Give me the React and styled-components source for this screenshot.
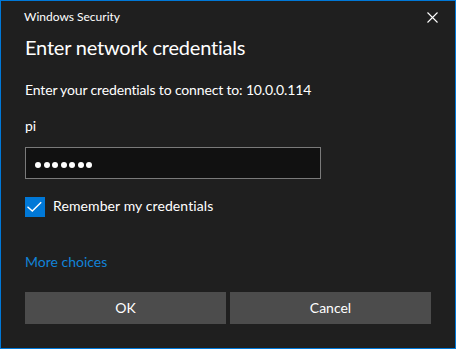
import React from "react";
import styled, { createGlobalStyle } from "styled-components";

const Global = createGlobalStyle`
  html, body { margin: 0; padding: 0; background: #1f1f1f; }
  * { box-sizing: border-box; }
`;

const FONT = `"Lato", "Noto Sans", sans-serif`;

const Window = styled.div`
  width: 456px;
  height: 349px;
  border: 1px solid #0078d7;
  background: #1f1f1f;
  color: #ffffff;
  font-family: ${FONT};
  display: flex;
  flex-direction: column;
`;

const TitleBar = styled.div`
  height: 31px;
  display: flex;
  align-items: center;
  justify-content: space-between;
  padding: 0 17px 0 23px;
`;

const TitleText = styled.span`
  font-size: 12px;
  line-height: 16px;
  color: #ffffff;
`;

const CloseButton = styled.button`
  width: 12px;
  height: 12px;
  padding: 0;
  border: 0;
  background: transparent;
  display: flex;
  align-items: center;
  justify-content: center;
  margin-top: 1px;
`;

const Content = styled.div`
  flex: 1;
  display: flex;
  flex-direction: column;
  padding: 1px 24px 24px 24px;
`;

const Heading = styled.h1`
  margin: 0;
  font-weight: 400;
  font-size: 20px;
  letter-spacing: -0.2px;
  line-height: 28px;
`;

const Text = styled.p`
  margin: ${(p) => p.$mt || 0}px 0 0 0;
  font-size: 14px;
  letter-spacing: -0.15px;
  line-height: 20px;
`;

const PasswordBox = styled.div`
  margin-top: 11px;
  height: 32px;
  width: 296px;
  border: 1px solid #7a7a7a;
  background: #111111;
  display: flex;
  align-items: center;
  gap: 2.5px;
  padding: 4px 0 0 9px;
`;

const Dot = styled.span`
  width: 6px;
  height: 6px;
  border-radius: 50%;
  background: #ffffff;
`;

const CheckRow = styled.label`
  margin-top: 18px;
  display: flex;
  align-items: flex-start;
  gap: 8px;
`;

const CheckBox = styled.span`
  width: 20px;
  height: 20px;
  background: #0078d7;
  display: flex;
`;

const CheckLabel = styled.span`
  font-size: 14px;
  letter-spacing: 0.1px;
  line-height: 20px;
  margin-top: -1px;
`;

const Link = styled.a`
  margin-top: 35px;
  font-size: 14px;
  letter-spacing: 0;
  line-height: 20px;
  color: #1283d8;
  text-decoration: none;
  align-self: flex-start;
`;

const ButtonRow = styled.div`
  margin-top: 20px;
  display: grid;
  grid-template-columns: 1fr 1fr;
  gap: 4px;
`;

const Button = styled.button`
  height: 32px;
  border: 0;
  background: #4c4c4c;
  color: #ffffff;
  font-family: ${FONT};
  font-size: 14px;
  line-height: 20px;
  padding: 0;
`;

export default function App() {
  return (
    <>
      <Global />
      <Window>
        <TitleBar>
          <TitleText>Windows Security</TitleText>
          <CloseButton aria-label="Close">
            <svg width="11" height="11" viewBox="0 0 11 11">
              <path d="M0.5 0.5 L10.5 10.5 M10.5 0.5 L0.5 10.5" stroke="#ffffff" strokeWidth="1.1" />
            </svg>
          </CloseButton>
        </TitleBar>
        <Content>
          <Heading>Enter network credentials</Heading>
          <Text $mt={19}>Enter your credentials to connect to: 10.0.0.114</Text>
          <Text $mt={16}>pi</Text>
          <PasswordBox>
            {Array.from({ length: 7 }).map((_, i) => (
              <Dot key={i} />
            ))}
          </PasswordBox>
          <CheckRow>
            <CheckBox>
              <svg width="20" height="20" viewBox="0 0 20 20">
                <path d="M2.5 9.8 L7.3 14 L16.2 5.2" fill="none" stroke="#ffffff" strokeWidth="1.4" />
              </svg>
            </CheckBox>
            <CheckLabel>Remember my credentials</CheckLabel>
          </CheckRow>
          <Link href="#">More choices</Link>
          <ButtonRow>
            <Button>OK</Button>
            <Button>Cancel</Button>
          </ButtonRow>
        </Content>
      </Window>
    </>
  );
}
